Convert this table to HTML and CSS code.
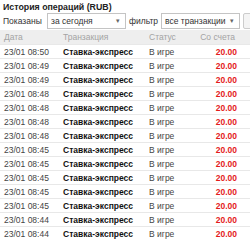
FILE: index.html
```html
<!DOCTYPE html>
<html>
<head>
<meta charset="utf-8">
<link rel="stylesheet" href="styles.css">
</head>
<body>
<div class="page">
  <h1 class="title">История операций (RUB)</h1>
  <div class="filters">
    <span class="label label-shown">Показаны</span>
    <div class="select sel-period"><span class="val">за сегодня</span><span class="arrow">▾</span></div>
    <span class="label label-filter">фильтр</span>
    <div class="select sel-filter"><span class="val">все транзакции</span><span class="arrow">▾</span></div>
    <div class="btn"></div>
  </div>
  <table class="ops">
    <colgroup><col class="w-date"><col class="w-tr"><col class="w-st"><col class="w-sum"></colgroup>
    <thead>
      <tr><th class="c-date">Дата</th><th class="c-tr">Транзакция</th><th class="c-st">Статус</th><th class="c-sum">Со счета</th></tr>
    </thead>
    <tbody>
      <tr><td class="c-date">23/01 08:50</td><td class="c-tr">Ставка-экспресс</td><td class="c-st">В игре</td><td class="c-sum">20.00</td></tr>
      <tr><td class="c-date">23/01 08:49</td><td class="c-tr">Ставка-экспресс</td><td class="c-st">В игре</td><td class="c-sum">20.00</td></tr>
      <tr><td class="c-date">23/01 08:49</td><td class="c-tr">Ставка-экспресс</td><td class="c-st">В игре</td><td class="c-sum">20.00</td></tr>
      <tr><td class="c-date">23/01 08:48</td><td class="c-tr">Ставка-экспресс</td><td class="c-st">В игре</td><td class="c-sum">20.00</td></tr>
      <tr><td class="c-date">23/01 08:48</td><td class="c-tr">Ставка-экспресс</td><td class="c-st">В игре</td><td class="c-sum">20.00</td></tr>
      <tr><td class="c-date">23/01 08:48</td><td class="c-tr">Ставка-экспресс</td><td class="c-st">В игре</td><td class="c-sum">20.00</td></tr>
      <tr><td class="c-date">23/01 08:48</td><td class="c-tr">Ставка-экспресс</td><td class="c-st">В игре</td><td class="c-sum">20.00</td></tr>
      <tr><td class="c-date">23/01 08:45</td><td class="c-tr">Ставка-экспресс</td><td class="c-st">В игре</td><td class="c-sum">20.00</td></tr>
      <tr><td class="c-date">23/01 08:45</td><td class="c-tr">Ставка-экспресс</td><td class="c-st">В игре</td><td class="c-sum">20.00</td></tr>
      <tr><td class="c-date">23/01 08:45</td><td class="c-tr">Ставка-экспресс</td><td class="c-st">В игре</td><td class="c-sum">20.00</td></tr>
      <tr><td class="c-date">23/01 08:45</td><td class="c-tr">Ставка-экспресс</td><td class="c-st">В игре</td><td class="c-sum">20.00</td></tr>
      <tr><td class="c-date">23/01 08:45</td><td class="c-tr">Ставка-экспресс</td><td class="c-st">В игре</td><td class="c-sum">20.00</td></tr>
      <tr><td class="c-date">23/01 08:44</td><td class="c-tr">Ставка-экспресс</td><td class="c-st">В игре</td><td class="c-sum">20.00</td></tr>
      <tr><td class="c-date">23/01 08:44</td><td class="c-tr">Ставка-экспресс</td><td class="c-st">В игре</td><td class="c-sum">20.00</td></tr>
    </tbody>
  </table>
</div>
</body>
</html>
```

FILE: styles.css
```css
html, body {
  margin: 0;
  padding: 0;
  background: #fff;
}
body {
  font-family: "Liberation Sans", Arial, sans-serif;
  font-size: 8.5px;
  color: #333;
  overflow: hidden;
}
.page {
  width: 250px;
  overflow: hidden;
}
.title {
  margin: 0;
  padding: 2px 3px 0;
  font-size: 8.8px;
  font-weight: bold;
  line-height: 10px;
  color: #222;
  white-space: nowrap;
}
.filters {
  display: flex;
  align-items: center;
  height: 18px;
  padding-left: 3px;
  white-space: nowrap;
}
.label {
  color: #333;
  flex-shrink: 0;
}
.label-shown {
  width: 44px;
}
.label-filter {
  width: 32px;
  margin-left: 3px;
}
.select {
  display: flex;
  align-items: center;
  justify-content: space-between;
  box-sizing: border-box;
  width: 79px;
  height: 16px;
  border: 1px solid #c4c4c4;
  background: #fff;
  padding: 0 5px 0 3px;
  color: #333;
  flex-shrink: 0;
  overflow: hidden;
}
.val {
  overflow: hidden;
}
.arrow {
  font-size: 7px;
  color: #666;
}
.btn {
  flex-shrink: 0;
  width: 20px;
  height: 16px;
  box-sizing: border-box;
  margin-left: 3px;
  border: 1px solid #ccc;
  border-radius: 2px;
  background: #f4f4f4;
}
.ops {
  width: 250px;
  border-collapse: collapse;
  table-layout: fixed;
  white-space: nowrap;
  margin-top: 0;
}
.w-date { width: 62px; }
.w-tr { width: 87px; }
.w-st { width: 41px; }
.w-sum { width: 60px; }
.ops th {
  background: #eee;
  color: #a3a3a3;
  font-weight: normal;
  height: 14px;
  padding: 0;
  text-align: left;
}
.ops td {
  height: 13px;
  padding: 0;
  border-top: 1px solid #e8e8e8;
  overflow: hidden;
}
.ops .c-date { padding-left: 4px; }
.ops .c-tr { padding-left: 1px; }
.ops .c-st { padding-left: 0; }
.ops th.c-sum { text-align: right; padding-right: 15px; }
.ops td.c-sum { text-align: right; padding-right: 13px; }
td.c-date { color: #444; }
td.c-tr { font-weight: bold; color: #111; }
td.c-st { color: #444; }
td.c-sum { font-weight: bold; color: #e41b1b; }
```
